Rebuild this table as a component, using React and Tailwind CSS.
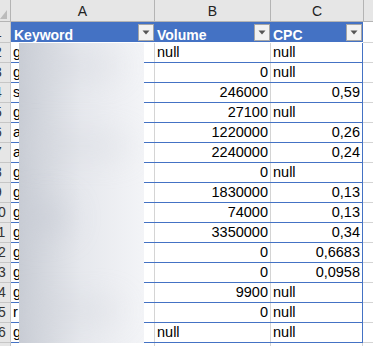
const ROWS = [
  ["g", "null", "null"],
  ["g", 0, "null"],
  ["s", 246000, "0,59"],
  ["g", 27100, "null"],
  ["a", 1220000, "0,26"],
  ["a", 2240000, "0,24"],
  ["g", 0, "null"],
  ["g", 1830000, "0,13"],
  ["g", 74000, "0,13"],
  ["g", 3350000, "0,34"],
  ["g", 0, "0,6683"],
  ["g", 0, "0,0958"],
  ["g", 9900, "null"],
  ["r", 0, "null"],
  ["g", "null", "null"],
];

function FilterButton() {
  return (
    <div className="mr-[1px] mt-[2px] flex h-[17px] w-[16px] shrink-0 items-center justify-center border border-[#a6a6a6] bg-[#f2f2f2]">
      <svg width="8" height="5" viewBox="0 0 8 5">
        <path d="M0.5 0.5h7L4 4.5z" fill="#555" />
      </svg>
    </div>
  );
}

function Cell({ value }) {
  const isText = value === "null";
  return (
    <div
      className={`flex h-full items-end pb-[3px] leading-none ${isText ? "justify-start pl-[2px]" : "justify-end pr-[2px]"}`}
    >
      {value}
    </div>
  );
}

export default function App() {
  return (
    <div
      className="relative h-[346px] w-[373px] overflow-hidden bg-white text-black"
      style={{ fontFamily: '"Liberation Sans", Arial, sans-serif' }}
    >
      {/* column letters */}
      <div className="flex h-[22px] border-b border-[#b4b4b4] bg-[#e6e6e6] text-[14px] text-[#222]">
        <div className="relative w-[11px] shrink-0 border-r border-[#b4b4b4]">
          <svg className="absolute left-0 top-[10px]" width="8" height="10" viewBox="0 0 8 10">
            <path d="M7 0V9H0z" fill="#bcbcbc" />
          </svg>
        </div>
        <div className="flex w-[144px] shrink-0 items-center justify-center border-r border-[#b4b4b4] pt-[2px]">A</div>
        <div className="flex w-[116px] shrink-0 items-center justify-center border-r border-[#b4b4b4] pt-[2px]">B</div>
        <div className="flex w-[93px] shrink-0 items-center justify-center border-r border-[#b4b4b4] pt-[2px]">C</div>
        <div className="flex-1" />
      </div>

      {/* table header */}
      <div className="flex h-[21px]">
        <div className="w-[11px] shrink-0 overflow-hidden border-r border-b border-[#c6c6c6] bg-[#e6e6e6]">
          <div className="-ml-[14px] w-[24px] text-center text-[14px] leading-[20px] text-[#333]">1</div>
        </div>
        <div className="flex w-[352px] shrink-0 border-b border-white bg-[#4472c4] text-[14px] font-bold text-white">
          <div className="flex w-[144px] shrink-0 items-start justify-between pl-[3px]">
            <span className="mt-[3px]">Keyword</span>
            <FilterButton />
          </div>
          <div className="flex w-[116px] shrink-0 items-start justify-between pl-[2px]">
            <span className="mt-[3px]">Volume</span>
            <FilterButton />
          </div>
          <div className="flex w-[92px] shrink-0 items-start justify-between pl-[2px]">
            <span className="mt-[3px]">CPC</span>
            <FilterButton />
          </div>
        </div>
        <div className="flex-1 border-b border-[#d4d4d4]" />
      </div>

      {/* data rows */}
      {ROWS.map((r, i) => (
        <div key={i} className="flex h-[20px] text-[14.5px]">
          <div className="w-[11px] shrink-0 overflow-hidden border-r border-b border-[#c6c6c6] bg-[#e6e6e6]">
            <div className="-ml-[14px] w-[24px] text-center text-[14px] leading-[19px] text-[#333]">{i + 2}</div>
          </div>
          <div className="flex w-[352px] shrink-0 border-b border-[#4472c4]">
            <div className="flex w-[144px] shrink-0 items-end border-r border-[#d4d4d4] pb-[3px] pl-[2px] leading-none">
              {r[0]}
            </div>
            <div className="w-[116px] shrink-0 border-r border-[#d4d4d4]">
              <Cell value={r[1]} />
            </div>
            <div className="w-[92px] shrink-0 border-r border-[#4472c4]">
              <Cell value={r[2]} />
            </div>
          </div>
          <div className="flex-1 border-b border-[#d4d4d4]" />
        </div>
      ))}
      <div className="flex h-[10px]">
        <div className="w-[11px] shrink-0 border-r border-[#c6c6c6] bg-[#e6e6e6]" />
        <div className="w-[144px] shrink-0 border-r border-[#d4d4d4]" />
        <div className="w-[116px] shrink-0 border-r border-[#d4d4d4]" />
        <div className="w-[92px] shrink-0 border-r border-[#d4d4d4]" />
      </div>

      {/* blurred keywords */}
      <div className="absolute left-[19px] top-[43px] h-[300px] w-[125px] overflow-hidden bg-gradient-to-r from-[#c8ccd4] via-[#e6e8ed] to-[#f3f4f7]">
        <div className="absolute left-[0px] top-[15px] h-[16px] w-[100px] rounded-full bg-[#d0d3da] opacity-60 blur-lg" />
        <div className="absolute left-[0px] top-[95px] h-[16px] w-[110px] rounded-full bg-[#d2d5dc] opacity-60 blur-lg" />
        <div className="absolute left-[0px] top-[160px] h-[30px] w-[50px] rounded-full bg-[#c6cad4] opacity-60 blur-lg" />
        <div className="absolute left-[0px] top-[260px] h-[16px] w-[100px] rounded-full bg-[#d0d3da] opacity-60 blur-lg" />
      </div>
    </div>
  );
}
